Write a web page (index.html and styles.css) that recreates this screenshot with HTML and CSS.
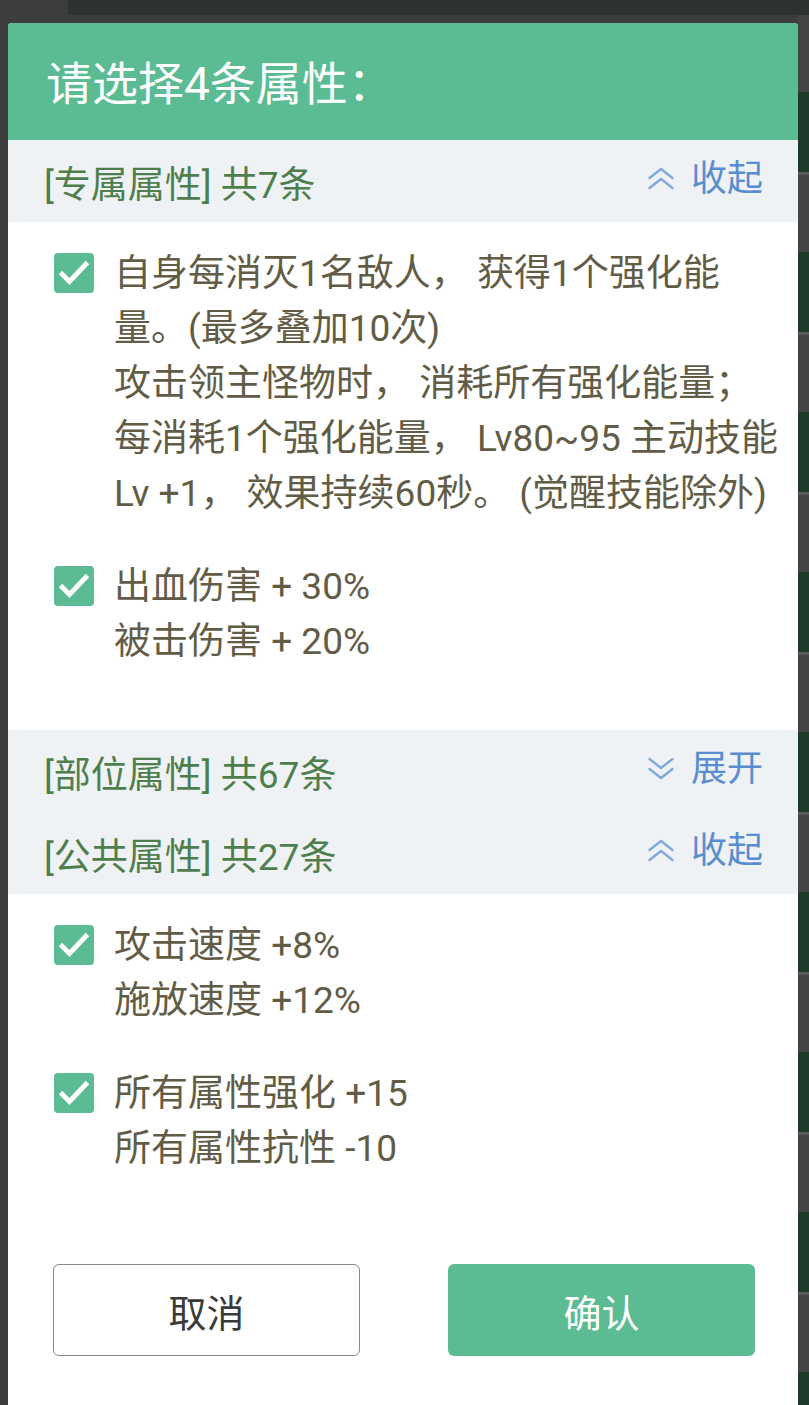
FILE: index.html
```html
<!DOCTYPE html>
<html lang="zh-CN">
<head>
<meta charset="utf-8">
<title>请选择4条属性</title>
<link rel="stylesheet" href="styles.css">
</head>
<body>
<div class="dialog">
  <div class="dialog-header">
    <h1 class="dialog-title">请选择4条属性：</h1>
  </div>

  <section class="group">
    <div class="group-head">
      <span class="group-name">[专属属性] 共7条</span>
      <span class="toggle"><svg class="chev" viewBox="0 0 28 25"><path d="M2.5 12 L14 3 L25.5 12 M2.5 22 L14 13 L25.5 22"/></svg>收起</span>
    </div>
    <ul class="options">
      <li class="option">
        <svg class="check" viewBox="0 0 40 40"><rect width="40" height="40" rx="4"/><path d="M6.5 19.5 L15.5 28.5 L33.5 9.5"/></svg>
        <p class="option-text">自身每消灭1名敌人， 获得1个强化能量。(最多叠加10次)<br>攻击领主怪物时， 消耗所有强化能量；<br>每消耗1个强化能量， Lv80~95 主动技能<br>Lv +1， 效果持续60秒。 (觉醒技能除外)</p>
      </li>
      <li class="option">
        <svg class="check" viewBox="0 0 40 40"><rect width="40" height="40" rx="4"/><path d="M6.5 19.5 L15.5 28.5 L33.5 9.5"/></svg>
        <p class="option-text">出血伤害 + 30%<br>被击伤害 + 20%</p>
      </li>
    </ul>
  </section>

  <section class="group">
    <div class="group-head">
      <span class="group-name">[部位属性] 共67条</span>
      <span class="toggle"><svg class="chev" viewBox="0 0 28 25"><path d="M2.5 3 L14 12 L25.5 3 M2.5 13 L14 22 L25.5 13"/></svg>展开</span>
    </div>
  </section>

  <section class="group">
    <div class="group-head">
      <span class="group-name">[公共属性] 共27条</span>
      <span class="toggle"><svg class="chev" viewBox="0 0 28 25"><path d="M2.5 12 L14 3 L25.5 12 M2.5 22 L14 13 L25.5 22"/></svg>收起</span>
    </div>
    <ul class="options options-last">
      <li class="option">
        <svg class="check" viewBox="0 0 40 40"><rect width="40" height="40" rx="4"/><path d="M6.5 19.5 L15.5 28.5 L33.5 9.5"/></svg>
        <p class="option-text">攻击速度 +8%<br>施放速度 +12%</p>
      </li>
      <li class="option">
        <svg class="check" viewBox="0 0 40 40"><rect width="40" height="40" rx="4"/><path d="M6.5 19.5 L15.5 28.5 L33.5 9.5"/></svg>
        <p class="option-text">所有属性强化 +15<br>所有属性抗性 -10</p>
      </li>
    </ul>
  </section>

  <div class="actions">
    <button class="btn btn-cancel" type="button">取消</button>
    <button class="btn btn-ok" type="button">确认</button>
  </div>
</div>
</body>
</html>
```

FILE: styles.css
```css
* {
  box-sizing: border-box;
}

html {
  background: #3d3d3d;
}

body {
  margin: 0;
  min-height: 100vh;
  font-family: Roboto, "Noto Sans CJK SC", sans-serif;
  background:
    linear-gradient(#2f3232, #2f3232) 68px 0 / 741px 15px no-repeat,
    repeating-linear-gradient(180deg, #1d3a2a 0 12px, #5a5a5a 12px 15px, #444444 15px 92px, #1d3a2a 92px 160px) right 0 top 0 / 11px 100% no-repeat,
    #3d3d3d;
  overflow: hidden;
}

.dialog {
  margin: 23px 0 0 8px;
  width: 790px;
  background: #ffffff;
  border-radius: 4px 4px 0 0;
  padding-bottom: 60px;
}

.dialog-header {
  height: 117px;
  background: #5bbc93;
  border-radius: 4px 4px 0 0;
  display: flex;
  align-items: center;
  padding: 4px 0 0 38px;
}

.dialog-title {
  margin: 0;
  font-size: 46px;
  font-weight: 400;
  color: #ffffff;
  line-height: 1;
}

.group-head {
  height: 82px;
  background: #eef2f5;
  display: flex;
  align-items: center;
  justify-content: space-between;
  padding: 0 35px 0 36px;
}

.group-name {
  font-size: 37px;
  line-height: 1;
  color: #4f7e4d;
  margin-top: 9px;
}

.toggle {
  display: flex;
  align-items: center;
  gap: 16px;
  font-size: 36px;
  line-height: 1;
  color: #5a8dcd;
  margin-bottom: 5px;
}

.chev {
  width: 28px;
  height: 25px;
  fill: none;
  stroke: #80a8db;
  stroke-width: 2.4;
  stroke-linecap: round;
  stroke-linejoin: round;
}

.options {
  list-style: none;
  margin: 0;
  padding: 24px 0 61px;
  display: flex;
  flex-direction: column;
  gap: 38px;
}

.options-last {
  padding-bottom: 61px;
}

.option {
  display: flex;
  align-items: flex-start;
  gap: 20px;
  padding: 0 13px 0 46px;
}

.check {
  flex: none;
  width: 40px;
  height: 40px;
  margin-top: 7px;
}

.check rect {
  fill: #5bbc93;
}

.check path {
  fill: none;
  stroke: #ffffff;
  stroke-width: 4.8;
  stroke-linecap: butt;
  stroke-linejoin: miter;
}

.option-text {
  margin: 0;
  flex: 1;
  font-size: 37px;
  line-height: 55px;
  color: #625c46;
}

.actions {
  display: flex;
  justify-content: space-between;
  padding: 27px 43px 0 45px;
}

.btn {
  width: 307px;
  height: 92px;
  border-radius: 6px;
  font-family: Roboto, "Noto Sans CJK SC", sans-serif;
  font-size: 38px;
  cursor: pointer;
}

.btn-cancel {
  background: #ffffff;
  border: 1px solid #8a8a8a;
  color: #3a3a3a;
}

.btn-ok {
  background: #5bbc93;
  border: none;
  color: #ffffff;
}
```
